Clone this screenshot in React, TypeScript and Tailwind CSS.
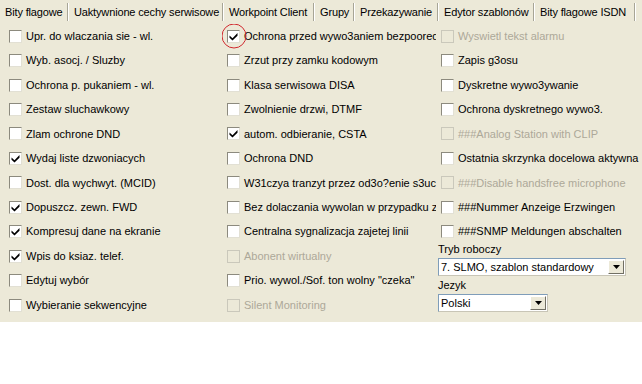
const tabs: { label: string; w: string }[] = [
  { label: "Bity flagowe", w: "w-[68px]" },
  { label: "Uaktywnione cechy serwisowe", w: "w-[155px]" },
  { label: "Workpoint Client", w: "w-[91px]" },
  { label: "Grupy", w: "w-[40px]" },
  { label: "Przekazywanie", w: "w-[84px]" },
  { label: "Edytor szablonów", w: "w-[96px]" },
  { label: "Bity flagowe ISDN", w: "w-[101px]" },
];

type Item = { label: string; checked?: boolean; disabled?: boolean; circled?: boolean };

const col1: Item[] = [
  { label: "Upr. do wlaczania sie  - wl." },
  { label: "Wyb. asocj. / Sluzby" },
  { label: "Ochrona p. pukaniem  - wl." },
  { label: "Zestaw sluchawkowy" },
  { label: "Zlam ochrone DND" },
  { label: "Wydaj liste dzwoniacych", checked: true },
  { label: "Dost. dla wychwyt. (MCID)" },
  { label: "Dopuszcz. zewn. FWD", checked: true },
  { label: "Kompresuj dane na ekranie", checked: true },
  { label: "Wpis do ksiaz. telef.", checked: true },
  { label: "Edytuj wybór" },
  { label: "Wybieranie sekwencyjne" },
];

const col2: Item[] = [
  { label: "Ochrona przed wywo3aniem bezpoorednim", checked: true, circled: true },
  { label: "Zrzut przy zamku kodowym" },
  { label: "Klasa serwisowa DISA" },
  { label: "Zwolnienie drzwi, DTMF" },
  { label: "autom. odbieranie, CSTA", checked: true },
  { label: "Ochrona DND" },
  { label: "W31czya tranzyt przez od3o?enie s3uchawki" },
  { label: "Bez dolaczania wywolan w przypadku zajetosci" },
  { label: "Centralna sygnalizacja zajetej linii" },
  { label: "Abonent wirtualny", disabled: true },
  { label: 'Prio. wywol./Sof. ton wolny "czeka"' },
  { label: "Silent Monitoring", disabled: true },
];

const col3: Item[] = [
  { label: "Wyswietl tekst alarmu", disabled: true },
  { label: "Zapis g3osu" },
  { label: "Dyskretne wywo3ywanie" },
  { label: "Ochrona dyskretnego wywo3." },
  { label: "###Analog Station with CLIP", disabled: true },
  { label: "Ostatnia skrzynka docelowa aktywna" },
  { label: "###Disable handsfree microphone", disabled: true },
  { label: "###Nummer Anzeige Erzwingen" },
  { label: "###SNMP Meldungen abschalten" },
];

function Check({ item }: { item: Item }) {
  return (
    <div className="relative flex h-[24.45px] items-center whitespace-nowrap">
      <span
        className={`relative mr-[4px] flex h-[13px] w-[13px] shrink-0 items-center justify-center border ${
          item.disabled
            ? "border-[#cac8bb] bg-[#ece9d8]"
            : "border-t-[#8c8a7e] border-l-[#8c8a7e] border-r-[#e2e0d4] border-b-[#e2e0d4] bg-white"
        }`}
      >
        {item.checked && (
          <svg width="9" height="9" viewBox="0 0 9 9">
            <path d="M0.5 3.5 L3.5 6.2 L8.5 1 L8.5 3.8 L3.5 8.6 L0.5 5.8 Z" fill="#000" />
          </svg>
        )}
        {item.circled && (
          <span className="absolute left-1/2 top-1/2 h-[25px] w-[25px] -translate-x-1/2 -translate-y-1/2 rounded-full border border-[#d0282e]" />
        )}
      </span>
      <span className={item.disabled ? "text-[#aca899]" : "text-black"}>{item.label}</span>
    </div>
  );
}

function Select({ value, width }: { value: string; width: string }) {
  return (
    <div
      className={`${width} flex h-[18px] items-center border border-t-[#7f9db9] border-l-[#7f9db9] border-b-[#c8c5b6] border-r-[#c8c5b6] bg-white`}
    >
      <span className="flex-1 truncate pl-[2px]">{value}</span>
      <span className="mr-[1px] flex h-[14px] w-[16px] items-center justify-center border border-t-white border-l-white border-b-[#716f64] border-r-[#716f64] bg-[#ece9d8]">
        <svg width="7" height="4" viewBox="0 0 7 4">
          <path d="M0 0 H7 L3.5 4 Z" fill="#000" />
        </svg>
      </span>
    </div>
  );
}

export default function App() {
  return (
    <div
      className="h-[384px] w-[642px] bg-white text-[11px] text-black"
      style={{ fontFamily: '"Liberation Sans", Arial, sans-serif' }}
    >
      <div className="h-[322px] bg-[#ece9d8]">
        <div className="flex h-[24px] items-center overflow-hidden whitespace-nowrap pl-[1px]">
          {tabs.map((t, i) => (
            <div key={t.label} className={`${t.w} flex shrink-0 items-center justify-between`}>
              <span className={`${i === 0 ? "pl-[4px]" : "pl-[5px]"} tracking-[-0.15px] leading-none`}>{t.label}</span>
              <span className="h-[18px] w-[2px] border-l border-[#a7a596] bg-white" />
            </div>
          ))}
        </div>
        <div className="flex">
          <div className="w-[222px] shrink-0 overflow-hidden pl-[9px]">
            {col1.map((it) => (
              <Check key={it.label} item={it} />
            ))}
          </div>
          <div className="w-[214px] shrink-0 overflow-hidden pl-[5px]">
            {col2.map((it) => (
              <Check key={it.label} item={it} />
            ))}
          </div>
          <div className="min-w-0 flex-1 overflow-hidden pl-[5px]">
            {col3.map((it) => (
              <Check key={it.label} item={it} />
            ))}
            <div className="-ml-[3px] mt-[-2px]">
              <div className="h-[14px] leading-[14px]">Tryb roboczy</div>
              <div className="mt-[2px]">
                <Select value="7. SLMO, szablon standardowy" width="w-[188px]" />
              </div>
              <div className="mt-[2px] h-[15px] leading-[15px]">Jezyk</div>
              <div className="mt-[1px]">
                <Select value="Polski" width="w-[110px]" />
              </div>
            </div>
          </div>
        </div>
      </div>
    </div>
  );
}
